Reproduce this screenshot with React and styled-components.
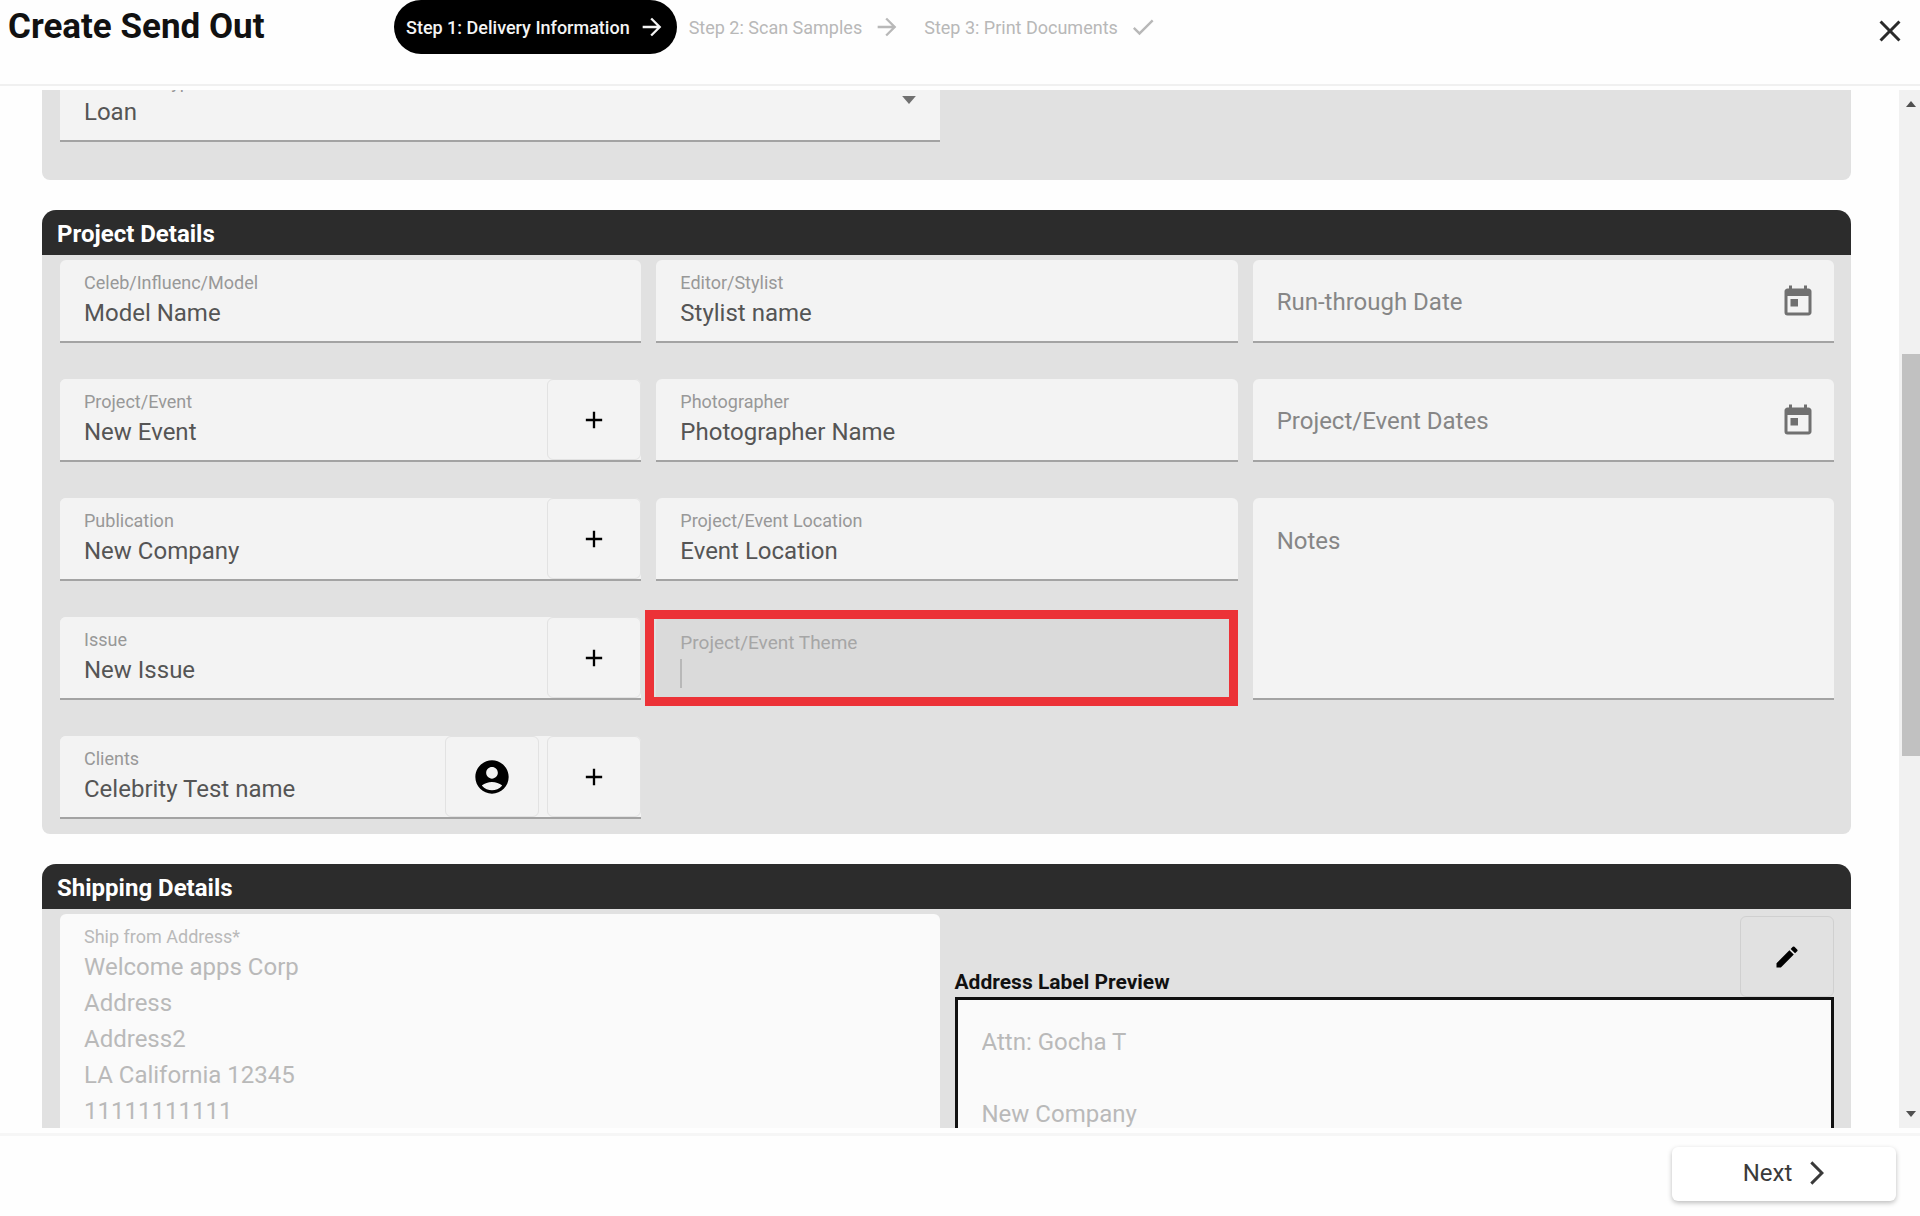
import React, { useLayoutEffect, useRef } from "react";
import styled, { createGlobalStyle, css } from "styled-components";
import {
  MdAccountCircle,
  MdAdd,
  MdArrowForward,
  MdArrowForwardIos,
  MdCheck,
  MdClose,
  MdEdit,
  MdToday,
} from "react-icons/md";

const GlobalStyle = createGlobalStyle`
  * {
    box-sizing: border-box;
  }
  body {
    margin: 0;
    background: #fff;
    font-family: Roboto, "Liberation Sans", sans-serif;
  }
  button, input, select, textarea {
    font-family: inherit;
    margin: 0;
  }
`;

const Page = styled.div`
  display: flex;
  flex-flow: column nowrap;
  height: 100vh;
  background: #fefefe;
`;
const Header = styled.header`
  display: flex;
  align-items: flex-start;
  justify-content: space-between;
  min-height: 86px;
  margin-bottom: 4px;
  padding: 0 12px 0 8px;
  border-bottom: 2px solid #f0f0f0;
`;
const Title = styled.h1`
  margin: 0;
  width: 386px;
  font-size: 35px;
  font-weight: 700;
  line-height: 54px;
  color: #111;
`;
const Steps = styled.nav`
  display: flex;
  flex: 1;
  align-items: center;
`;
const Step = styled.button`
  display: flex;
  align-items: center;
  gap: ${({ $active }) => ($active ? 8 : 11)}px;
  height: 54px;
  padding: 0 11px 0 12px;
  border: 0;
  border-radius: 27px;
  background: ${({ $active }) => ($active ? "#000" : "transparent")};
  color: ${({ $active }) => ($active ? "#f4f4f4" : "#b8b8b8")};
  font-size: 18px;
  font-weight: ${({ $active }) => ($active ? 500 : 400)};
`;
const CloseButton = styled.button`
  display: flex;
  padding: 13px 0 0;
  border: 0;
  background: none;
  color: #2a2a2a;
`;

const Middle = styled.div`
  display: flex;
  flex: 1;
  min-height: 0;
`;
const Scroller = styled.main`
  display: flex;
  flex: 1;
  flex-flow: column nowrap;
  gap: 30px;
  min-width: 0;
  padding: 0 48px 30px 42px;
  overflow-y: auto;
  scrollbar-width: none;
`;
const Scrollbar = styled.div`
  display: flex;
  flex-flow: column nowrap;
  width: 21px;
  padding-left: 3px;
  background: #f1f1f1;
`;
const ScrollArrow = styled.button`
  display: flex;
  align-items: center;
  justify-content: center;
  height: 28px;
  padding: 0;
  border: 0;
  background: none;
`;
const Track = styled.div`
  display: grid;
  flex: 1;
  grid-template-rows: 24fr 41fr 35fr;
`;
const Thumb = styled.div`
  grid-row: 2;
  background: #c1c1c1;
`;

const Card = styled.section`
  flex: none;
  border-radius: 14px 14px 8px 8px;
  background: #e1e1e1;
  overflow: hidden;
`;
const CardTitle = styled.h2`
  margin: 0;
  padding: 4px 15px 0;
  background: #2c2c2c;
  color: #fff;
  font-size: 24px;
  font-weight: 700;
  line-height: 41px;
`;
const CardBody = styled.div`
  display: grid;
  grid-template-columns: repeat(${({ $columns }) => $columns}, minmax(0, 1fr));
  gap: 36px 15px;
  padding: 5px 17px ${({ $bottom }) => $bottom || 15}px 18px;
`;
const Column = styled.div`
  display: flex;
  flex-flow: column nowrap;
  gap: 36px;
`;

const FieldBox = styled.div`
  display: flex;
  flex-flow: column nowrap;
  flex: ${({ $grow }) => ($grow ? 1 : "none")};
  min-width: 0;
  padding: 11px 24px 10px;
  border-bottom: 2px solid ${({ $disabled }) => ($disabled ? "#ccc" : "#a3a3a3")};
  border-radius: 6px 6px 0 0;
  background: ${({ $disabled }) => ($disabled ? "#fafafa" : "#f3f3f3")};
`;
const Label = styled.label`
  color: ${({ $disabled }) => ($disabled ? "#b9b9b9" : "#989898")};
  font-size: 18px;
  line-height: 24px;
  white-space: nowrap;
`;
const HighlightBox = styled(FieldBox)`
  position: relative;
  padding-top: 14px;
  padding-bottom: 7px;
  background: #dadada;

  ${Label} {
    color: #a6a6a6;
    font-size: 19px;
  }
  &::after {
    content: "";
    position: absolute;
    inset: -7px 0 -8px -11px;
    border: 9px solid #ec3237;
    pointer-events: none;
  }
`;
const RestingBox = styled(FieldBox)`
  flex-direction: row;
  align-items: center;
  height: 83px;
  padding: 3px 18px 0 24px;
`;
const NotesBox = styled(FieldBox)`
  height: 202px;
  padding-top: 25px;
`;
const ActionBox = styled.div`
  display: flex;
  gap: 8px;
  height: 83px;
  border-bottom: 2px solid #a3a3a3;
  border-radius: 6px 6px 0 0;
  background: #f3f3f3;

  ${FieldBox} {
    border-bottom: 0;
  }
`;
const RestingLabel = styled(Label)`
  color: #868686;
  font-size: 24px;
  line-height: 36px;
`;
const control = css`
  display: block;
  width: 100%;
  min-width: 0;
  padding: 0;
  border: 0;
  outline: 0;
  background: transparent;
  color: #555;
  font-size: 24px;
  line-height: 36px;
`;
const Input = styled.input`
  ${control}
  height: 36px;
`;
const Select = styled.select`
  ${control}
  height: 36px;
  appearance: none;
`;
const Textarea = styled.textarea`
  ${control}
  flex: 1;
  resize: none;
  overflow: hidden;

  &:disabled {
    color: #b9b9b9;
  }
`;
const InputRow = styled.div`
  display: flex;
  align-items: center;
`;
const Caret = styled.span`
  flex: none;
  width: 2px;
  height: 29px;
  background: #b8b8b8;
`;
const SelectBox = styled(FieldBox)`
  flex-direction: row;
  align-items: center;
`;
const SelectMain = styled.div`
  display: flex;
  flex: 1;
  flex-flow: column nowrap;
`;
const IconButton = styled.button`
  display: flex;
  flex: none;
  padding: 0;
  border: 0;
  background: none;
  color: #707070;
`;
const SquareButton = styled.button`
  display: flex;
  flex: none;
  align-items: center;
  justify-content: center;
  width: 94px;
  height: 81px;
  padding: 0;
  border: 1px solid ${({ $dark }) => ($dark ? "#d0d0d0" : "#e2e2e2")};
  border-radius: 6px;
  background: transparent;
  color: #000;
`;

const Preview = styled.div`
  display: flex;
  flex-flow: column nowrap;
`;
const PreviewHead = styled.div`
  display: flex;
  align-items: flex-end;
  justify-content: space-between;
  height: 83px;
`;
const PreviewLabel = styled.label`
  color: #111;
  font-size: 21px;
  font-weight: 700;
  line-height: 30px;
`;
const PreviewBox = styled.div`
  display: flex;
  flex: 1;
  padding: 24px;
  border: 3px solid #111;
  background: #fafafa;
`;

const Footer = styled.footer`
  display: flex;
  justify-content: flex-end;
  margin-top: 5px;
  padding: 11px 24px 15px;
  border-top: 3px solid #f6f6f6;
`;
const NextButton = styled.button`
  display: flex;
  align-items: center;
  justify-content: center;
  gap: 11px;
  width: 224px;
  height: 54px;
  padding: 0 0 2px 6px;
  border: 0;
  border-radius: 6px;
  background: #fff;
  box-shadow: 0 2px 5px rgba(0, 0, 0, 0.26);
  color: #3a3a3a;
  font-size: 24px;
`;

const Triangle = ({ up, width = 10, color = "#505050" }) => (
  <svg width={width} height={width / 2 + 1} viewBox="0 0 12 7" fill={color} aria-hidden="true">
    <path d={up ? "M0 7L6 0L12 7Z" : "M0 0H12L6 7Z"} />
  </svg>
);

function TextField({ id, label, value, highlight, grow }) {
  const Box = highlight ? HighlightBox : FieldBox;
  return (
    <Box $grow={grow}>
      <Label htmlFor={id}>{label}</Label>
      <InputRow>
        {highlight && <Caret />}
        <Input id={id} defaultValue={value} />
      </InputRow>
    </Box>
  );
}

function ActionField({ id, label, value, withAccount }) {
  return (
    <ActionBox>
      <TextField id={id} label={label} value={value} grow />
      {withAccount && (
        <SquareButton type="button" aria-label="Choose client">
          <MdAccountCircle size={40} />
        </SquareButton>
      )}
      <SquareButton type="button" aria-label={`Add ${label}`}>
        <MdAdd size={28} />
      </SquareButton>
    </ActionBox>
  );
}

function DateField({ id, label }) {
  return (
    <RestingBox>
      <RestingLabel htmlFor={id}>{label}</RestingLabel>
      <Input id={id} />
      <IconButton type="button" aria-label={`Open ${label} calendar`}>
        <MdToday size={36} />
      </IconButton>
    </RestingBox>
  );
}

const shipFrom = [
  "Welcome apps Corp",
  "Address",
  "Address2",
  "LA California 12345",
  "11111111111",
].join("\n");

const shipTo = ["Attn: Gocha T", "", "New Company"].join("\n");

function App() {
  const scroller = useRef(null);

  useLayoutEffect(() => {
    scroller.current.scrollTop = 36;
  }, []);

  return (
    <Page>
      <GlobalStyle />
      <Header>
        <Title>Create Send Out</Title>
        <Steps>
          <Step type="button" $active>
            Step 1: Delivery Information
            <MdArrowForward size={28} />
          </Step>
          <Step type="button">
            Step 2: Scan Samples
            <MdArrowForward size={28} />
          </Step>
          <Step type="button">
            Step 3: Print Documents
            <MdCheck size={28} />
          </Step>
        </Steps>
        <CloseButton type="button" aria-label="Close">
          <MdClose size={36} />
        </CloseButton>
      </Header>

      <Middle>
        <Scroller ref={scroller}>
          <Card>
            <CardBody $columns={2} $bottom={38}>
              <SelectBox>
                <SelectMain>
                  <Label htmlFor="type">Send Out Type</Label>
                  <Select id="type" defaultValue="Loan">
                    <option>Loan</option>
                  </Select>
                </SelectMain>
                <Triangle width={14} color="#707070" />
              </SelectBox>
            </CardBody>
          </Card>

          <Card>
            <CardTitle>Project Details</CardTitle>
            <CardBody $columns={3}>
              <Column>
                <TextField id="model" label="Celeb/Influenc/Model" value="Model Name" />
                <ActionField id="event" label="Project/Event" value="New Event" />
                <ActionField id="publication" label="Publication" value="New Company" />
                <ActionField id="issue" label="Issue" value="New Issue" />
                <ActionField id="clients" label="Clients" value="Celebrity Test name" withAccount />
              </Column>
              <Column>
                <TextField id="stylist" label="Editor/Stylist" value="Stylist name" />
                <TextField id="photographer" label="Photographer" value="Photographer Name" />
                <TextField id="location" label="Project/Event Location" value="Event Location" />
                <TextField id="theme" label="Project/Event Theme" value="" highlight />
              </Column>
              <Column>
                <DateField id="runthrough" label="Run-through Date" />
                <DateField id="dates" label="Project/Event Dates" />
                <NotesBox>
                  <RestingLabel htmlFor="notes">Notes</RestingLabel>
                  <Textarea id="notes" />
                </NotesBox>
              </Column>
            </CardBody>
          </Card>

          <Card>
            <CardTitle>Shipping Details</CardTitle>
            <CardBody $columns={2}>
              <FieldBox $disabled>
                <Label htmlFor="from" $disabled>
                  Ship from Address*
                </Label>
                <Textarea id="from" rows={8} defaultValue={shipFrom} disabled />
              </FieldBox>
              <Preview>
                <PreviewHead>
                  <PreviewLabel htmlFor="preview">Address Label Preview</PreviewLabel>
                  <SquareButton type="button" aria-label="Edit address label" $dark>
                    <MdEdit size={28} />
                  </SquareButton>
                </PreviewHead>
                <PreviewBox>
                  <Textarea id="preview" defaultValue={shipTo} disabled />
                </PreviewBox>
              </Preview>
            </CardBody>
          </Card>
        </Scroller>
        <Scrollbar>
          <ScrollArrow type="button" aria-label="Scroll up">
            <Triangle up />
          </ScrollArrow>
          <Track>
            <Thumb />
          </Track>
          <ScrollArrow type="button" aria-label="Scroll down">
            <Triangle />
          </ScrollArrow>
        </Scrollbar>
      </Middle>

      <Footer>
        <NextButton type="button">
          Next
          <MdArrowForwardIos size={28} />
        </NextButton>
      </Footer>
    </Page>
  );
}

export default App;
